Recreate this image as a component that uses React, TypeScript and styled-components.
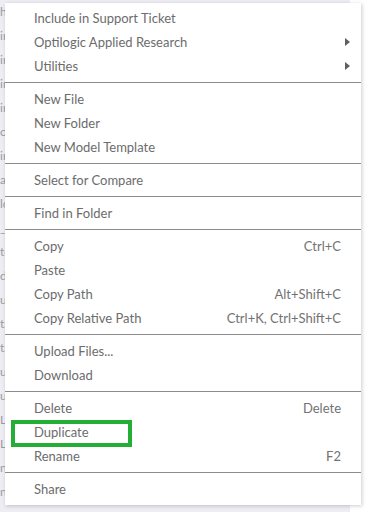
import React from 'react';
import styled, { createGlobalStyle } from 'styled-components';

const GlobalStyle = createGlobalStyle`
    html, body {
        margin: 0;
        padding: 0;
        background: #ffffff;
    }
    body {
        font-family: Lato, "Open Sans", sans-serif;
    }
`;

const Page = styled.div`
    position: relative;
    width: 368px;
    height: 512px;
    overflow: hidden;
    background: #ffffff;
`;

// Explorer tree behind the menu
const Tree = styled.div`
    width: 350px;
    height: 512px;
    background: #eeedf3;
    display: flex;
    flex-direction: column;
    overflow: hidden;
`;

const TreeRow = styled.div`
    flex: none;
    height: 24px;
    line-height: 24px;
    font-size: 12px;
    color: #9a9aa5;
    white-space: nowrap;
`;

const Menu = styled.div`
    position: absolute;
    left: 5px;
    top: 3px;
    width: 356px;
    background: #ffffff;
    padding: 3px 0 4px;
    box-shadow: 1px 1px 4px rgba(0, 0, 0, 0.2);
    font-family: Lato, "Open Sans", sans-serif;
    font-size: 13px;
    color: #6c6c6c;
`;

const Item = styled.div`
    height: 24px;
    display: flex;
    align-items: center;
    padding: 0 20px 0 29px;
    white-space: nowrap;
`;

const Label = styled.span`
    flex: 1;
`;

const Shortcut = styled.span`
    color: #727272;
`;

const Arrow = styled.span`
    width: 0;
    height: 0;
    margin-right: -9px;
    border-top: 4px solid transparent;
    border-bottom: 4px solid transparent;
    border-left: 5px solid #5f5f5f;
`;

const Separator = styled.div`
    height: 1px;
    margin: 4px 0;
    background: #8c8c8c;
`;

const Highlight = styled.div`
    position: absolute;
    left: 11px;
    top: 420px;
    width: 121px;
    height: 27px;
    box-sizing: border-box;
    border: 4px solid #25ae35;
`;

type Entry = { label: string; shortcut?: string; submenu?: boolean } | 'sep';

const entries: Entry[] = [
    { label: 'Include in Support Ticket' },
    { label: 'Optilogic Applied Research', submenu: true },
    { label: 'Utilities', submenu: true },
    'sep',
    { label: 'New File' },
    { label: 'New Folder' },
    { label: 'New Model Template' },
    'sep',
    { label: 'Select for Compare' },
    'sep',
    { label: 'Find in Folder' },
    'sep',
    { label: 'Copy', shortcut: 'Ctrl+C' },
    { label: 'Paste' },
    { label: 'Copy Path', shortcut: 'Alt+Shift+C' },
    { label: 'Copy Relative Path', shortcut: 'Ctrl+K, Ctrl+Shift+C' },
    'sep',
    { label: 'Upload Files...' },
    { label: 'Download' },
    'sep',
    { label: 'Delete', shortcut: 'Delete' },
    { label: 'Duplicate' },
    { label: 'Rename', shortcut: 'F2' },
    'sep',
    { label: 'Share' },
];

const treeRows = [
    'hdrdata', 'in', 'in', 'in', 'in_', 'ol', 'in', 'ag_', 'lo', '_', 'tc',
    'di', 'u', 'ta', 'ta', 'ut', 'ur', 'L_', 'L_', 'ne', 'ni',
];

const App = () => {
    return (
        <Page>
            <GlobalStyle />
            <Tree>
                {treeRows.map((t, i) => (
                    <TreeRow key={i}>{t}</TreeRow>
                ))}
            </Tree>
            <Menu>
                {entries.map((e, i) =>
                    e === 'sep' ? (
                        <Separator key={i} />
                    ) : (
                        <Item key={i}>
                            <Label>{e.label}</Label>
                            {e.shortcut && <Shortcut>{e.shortcut}</Shortcut>}
                            {e.submenu && <Arrow />}
                        </Item>
                    )
                )}
            </Menu>
            <Highlight />
        </Page>
    );
};

export default App;
